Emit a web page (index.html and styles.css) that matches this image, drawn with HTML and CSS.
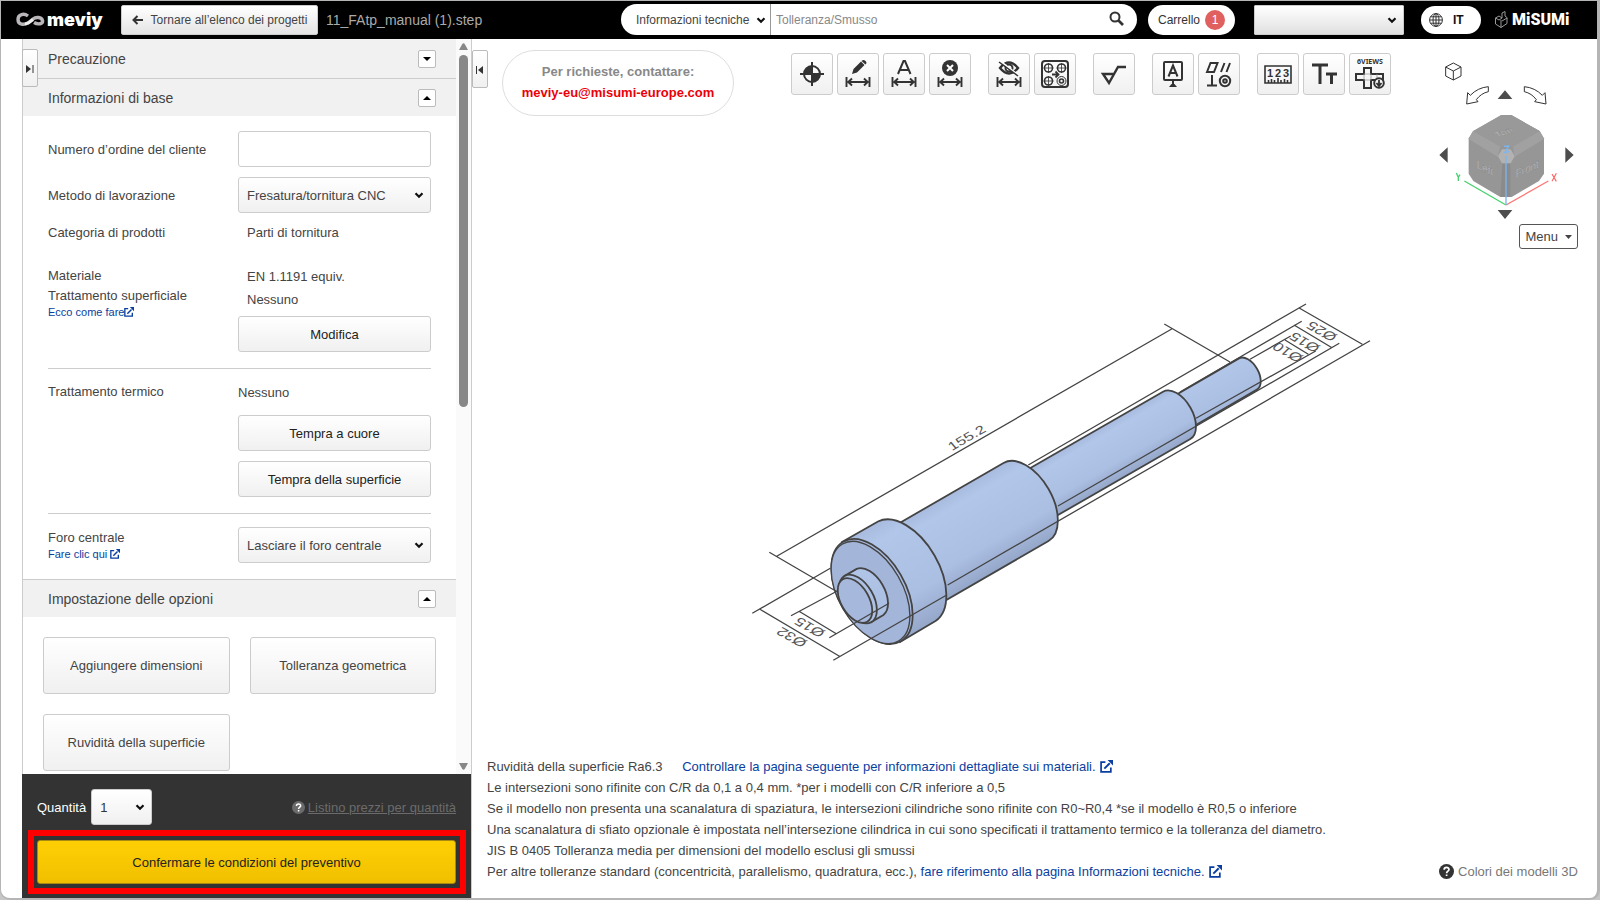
FILE: index.html
```html
<!DOCTYPE html>
<html lang="it">
<head>
    <meta charset="UTF-8">
    <meta name="viewport" content="width=device-width, initial-scale=1.0">
    <title>meviy - 11_FAtp_manual (1).step</title>
    <link rel="stylesheet" href="styles.css">
</head>
<body>

<!-- Shared icons -->
<svg class="sprite" aria-hidden="true">
    <symbol id="chevron" viewBox="0 0 10 8"><path d="M1.5 2.2L5 5.7l3.500-3.500" fill="none" stroke="currentColor" stroke-width="2.200"/></symbol>
    <symbol id="external" viewBox="0 0 12 12">
        <path d="M5 2H1v9h9V7" fill="none" stroke="currentColor" stroke-width="1.6"/>
        <path d="M4 8l5-5" fill="none" stroke="currentColor" stroke-width="1.8"/>
        <path d="M7 0h5v5z" fill="currentColor"/>
    </symbol>
    <symbol id="question" viewBox="0 0 14 14">
        <circle cx="7" cy="7" r="7" fill="currentColor"/>
        <path d="M4.8 5.4c0-3 4.6-2.8 4.5-.2C9.2 6.7 7.1 6.7 7.1 8.6M7.1 9.7v1.6" fill="none" class="mark" stroke-width="1.6"/>
    </symbol>
    <symbol id="dim" viewBox="0 0 26 12">
        <path d="M1.5 1v10M24.5 1v10M3 6h20M7 2.5L3.3 6 7 9.5M19 2.5L22.7 6 19 9.5" fill="none" stroke="currentColor" stroke-width="1.9"/>
    </symbol>
</svg>

<div class="window">
    <header class="topbar">
        <div class="logo">
            <svg width="29" height="16" viewBox="0 0 29 16">
                <path d="M12 4C8 1 2 2 2 7.500S8 13 12 11l5-4c3-2.500 8.500-2 9.500 1.500S22 13 18 10.500" fill="none" stroke="#b9b5b9" stroke-width="3.4"/>
                <path d="M9 11.5c3 1 5-1.500 8-4" fill="none" stroke="#eee" stroke-width="3"/>
            </svg>
            <span>meviy</span>
        </div>
        <button class="back">
            <svg width="11" height="10" viewBox="0 0 11 10"><path d="M11 5H2M5.500 1l-4 4 4 4" fill="none" stroke="#333" stroke-width="2"/></svg>
            Tornare all’elenco dei progetti
        </button>
        <span class="filename">11_FAtp_manual (1).step</span>

        <form class="search">
            <div class="select search-type">
                <select aria-label="Tipo di ricerca"><option>Informazioni tecniche</option></select>
                <svg class="chevron"><use href="#chevron"/></svg>
            </div>
            <input type="text" placeholder="Tolleranza/Smusso" aria-label="Cerca">
            <button type="button" aria-label="Cerca">
                <svg width="15" height="15" viewBox="0 0 15 15"><circle cx="6" cy="6" r="4.5" fill="none" stroke="#333" stroke-width="2"/><path d="M9.5 9.5l4.500 4.500" stroke="#333" stroke-width="2.6"/></svg>
            </button>
        </form>
        <button class="cart">Carrello <span class="badge">1</span></button>
        <div class="select account">
            <select aria-label="Account"><option></option></select>
            <svg class="chevron"><use href="#chevron"/></svg>
        </div>
        <button class="lang">
            <svg width="14" height="14" viewBox="0 0 14 14" fill="none" stroke="#333"><circle cx="7" cy="7" r="6.4"/><ellipse cx="7" cy="7" rx="3" ry="6.4"/><path d="M7 .6v12.800M.6 7h12.800M1.500 3.800h11M1.500 10.200h11"/></svg>
            IT
        </button>
        <div class="misumi">
            <svg width="13" height="17" viewBox="0 0 13 17" fill="none" stroke="#999"><path d="M.5 7l3.500-2 3 2-3 2zM.5 7v6L6 16.500V9M6 16.500l6-4V7L7 10M7 7V2l3-1.500V5l2.500 2"/></svg>
            <span>MiSUMi</span>
        </div>
    </header>

    <div class="content">
        <aside class="panel">
            <button class="toggle toggle-left" aria-label="Chiudi pannello">
                <svg width="8" height="8" viewBox="0 0 8 8"><path d="M0 0l5 4-5 4z" fill="#333"/><path d="M7 0v8" stroke="#333"/></svg>
            </button>
            <div class="panel-scroll">
                <div class="panel-body">
                    <div class="section-title">
                        <h2>Precauzione</h2>
                        <button class="fold" aria-label="Apri"><svg width="8" height="4" viewBox="0 0 8 4"><path d="M0 0h8L4 4z"/></svg></button>
                    </div>
                    <div class="section-title">
                        <h2>Informazioni di base</h2>
                        <button class="fold" aria-label="Chiudi"><svg width="8" height="4" viewBox="0 0 8 4"><path d="M0 4h8L4 0z"/></svg></button>
                    </div>

                    <div class="fields">
                        <div class="field center">
                            <label for="orderNo">Numero d’ordine del cliente</label>
                            <input type="text" id="orderNo">
                        </div>
                        <div class="field center">
                            <label for="method">Metodo di lavorazione</label>
                            <div class="select">
                                <select id="method"><option>Fresatura/tornitura CNC</option></select>
                                <svg class="chevron"><use href="#chevron"/></svg>
                            </div>
                        </div>
                        <div class="field category">
                            <span>Categoria di prodotti</span>
                            <span class="value">Parti di tornitura</span>
                        </div>
                        <div class="field">
                            <div class="names">
                                <p>Materiale</p>
                                <p>Trattamento superficiale</p>
                                <a href="#">Ecco come fare<svg><use href="#external"/></svg></a>
                            </div>
                            <div class="stack material">
                                <p class="value">EN 1.1191 equiv.</p>
                                <p class="value">Nessuno</p>
                                <button class="btn">Modifica</button>
                            </div>
                        </div>
                        <hr>
                        <div class="field">
                            <div class="names"><p>Trattamento termico</p></div>
                            <div class="stack heat">
                                <p>Nessuno</p>
                                <button class="btn">Tempra a cuore</button>
                                <button class="btn">Tempra della superficie</button>
                            </div>
                        </div>
                        <hr>
                        <div class="field hole">
                            <div class="names">
                                <label for="hole">Foro centrale</label>
                                <a href="#">Fare clic qui <svg><use href="#external"/></svg></a>
                            </div>
                            <div class="select">
                                <select id="hole"><option>Lasciare il foro centrale</option></select>
                                <svg class="chevron"><use href="#chevron"/></svg>
                            </div>
                        </div>
                    </div>

                    <div class="section-title">
                        <h2>Impostazione delle opzioni</h2>
                        <button class="fold" aria-label="Chiudi"><svg width="8" height="4" viewBox="0 0 8 4"><path d="M0 4h8L4 0z"/></svg></button>
                    </div>
                    <div class="options">
                        <button class="btn">Aggiungere dimensioni</button>
                        <button class="btn">Tolleranza geometrica</button>
                        <button class="btn">Ruvidità della superficie</button>
                    </div>
                </div>
                <div class="scrollbar">
                    <svg width="9" height="7" viewBox="0 0 9 7"><path d="M0 7h9L6 1.500Q4.500-1 3 1.500z" fill="#888"/></svg>
                    <div class="track"><div class="thumb"></div></div>
                    <svg width="9" height="7" viewBox="0 0 9 7"><path d="M0 0h9L6 5.500Q4.500 8 3 5.500z" fill="#888"/></svg>
                </div>
            </div>

            <div class="order">
                <div class="order-row">
                    <label for="qty">Quantità</label>
                    <div class="select qty">
                        <select id="qty"><option>1</option></select>
                        <svg class="chevron"><use href="#chevron"/></svg>
                    </div>
                    <a href="#" class="price-list"><svg><use href="#question"/></svg><span>Listino prezzi per quantità</span></a>
                </div>
                <div class="highlight">
                    <button class="confirm">Confermare le condizioni del preventivo</button>
                </div>
            </div>
        </aside>

        <main class="viewer">
            <button class="toggle toggle-right" aria-label="Apri pannello">
                <svg width="8" height="8" viewBox="0 0 8 8"><path d="M7 0L2 4l5 4z" fill="#333"/><path d="M.5 0v8" stroke="#333"/></svg>
            </button>
            <div class="viewer-top">
                <div class="contact">
                    <p>Per richieste, contattare:</p>
                    <a href="mailto:meviy-eu@misumi-europe.com">meviy-eu@misumi-europe.com</a>
                </div>
                <div class="toolbar">
                    <div class="group">
                        <button aria-label="Origine"><svg viewBox="0 0 40 40"><circle cx="20" cy="20" r="8" fill="none" stroke="#333" stroke-width="2"/><path d="M20 20v-8a8 8 0 0 0-8 8zM20 20v8a8 8 0 0 0 8-8z" fill="#333"/><path d="M20 8v24M8 20h24" stroke="#333" stroke-width="2"/></svg></button>
                        <button aria-label="Modifica quota"><svg viewBox="0 0 40 40"><use href="#dim" x="7" y="22" width="26" height="12"/><path d="M14 20l1.500-5L23 7.500l3.500 3.500L19 18.500zM24 6.500q1.500-1 3 0t1.500 2.500L27.500 10.500 23.500 7z" fill="#333"/></svg></button>
                        <button aria-label="Quota con testo"><svg viewBox="0 0 40 40"><use href="#dim" x="7" y="22" width="26" height="12"/><path d="M14 20l5.500-13h1.500L26.500 20M16 16h8.500" fill="none" stroke="#333" stroke-width="2"/></svg></button>
                        <button aria-label="Elimina quota"><svg viewBox="0 0 40 40"><use href="#dim" x="7" y="22" width="26" height="12"/><circle cx="20" cy="14" r="8" fill="#333"/><path d="M17 11l6 6M23 11l-6 6" stroke="#fff" stroke-width="2"/></svg></button>
                    </div>
                    <div class="group">
                        <button aria-label="Nascondi quote"><svg viewBox="0 0 40 40"><use href="#dim" x="7" y="22" width="26" height="12"/><path d="M11 14q9-11 18 0-9 11-18 0z" fill="none" stroke="#333" stroke-width="2.4"/><circle cx="20" cy="14" r="3.5" fill="none" stroke="#333" stroke-width="2"/><path d="M11 7l18 14" stroke="#fff" stroke-width="2"/><path d="M10 8l19 14" stroke="#333" stroke-width="1.5"/></svg></button>
                        <button aria-label="Fori"><svg viewBox="0 0 40 40" fill="none" stroke="#333" stroke-width="1.6"><rect x="7" y="7" width="26" height="26" rx="3" stroke-width="2"/><circle cx="13.5" cy="14" r="4"/><circle cx="26.5" cy="14" r="4"/><circle cx="13.5" cy="27" r="4"/><circle cx="26.5" cy="27" r="4.5" stroke-width="1"/><circle cx="26.5" cy="27" r="2"/><path d="M13.500 9v10M8.500 14h10M26.500 9v10M21.500 14h10M13.500 22v10M8.500 27h10" stroke-width=".8"/><path d="M17 20.500h6M20.500 17.500l3 3-3 3" stroke-width="1.8"/></svg></button>
                    </div>
                    <div class="group">
                        <button aria-label="Rugosità"><svg viewBox="0 0 40 40" fill="none" stroke="#333" stroke-width="2.4"><path d="M32 13h-8l-9 16-6-9h11"/></svg></button>
                    </div>
                    <div class="group">
                        <button aria-label="Riferimento"><svg viewBox="0 0 40 40" fill="none" stroke="#333" stroke-width="2"><rect x="11" y="8" width="18" height="18" rx="1"/><path d="M15.500 22.500l4.500-11 4.500 11M17 19h6M20 26v4"/><path d="M16 33h8l-2.500-3h-3z" fill="#333" stroke="none"/></svg></button>
                        <button aria-label="Tolleranza geometrica"><svg viewBox="0 0 40 40" fill="none" stroke="#333" stroke-width="2"><path d="M8 18l3.500-9h7L15 18zM22 18l3.500-9M27.500 18L31 9M13 21v11M8 31.500h10"/><circle cx="26" cy="27" r="5.2"/><circle cx="26" cy="27" r="1.8"/></svg></button>
                    </div>
                    <div class="group">
                        <button aria-label="Misura"><svg viewBox="0 0 40 40"><path d="M7 12h26v17H7zM10.500 29v-3M13.500 29v-4M16.500 29v-3M20 29v-5M23 29v-3M26.500 29v-4M29.500 29v-3" fill="none" stroke="#333" stroke-width="1.6"/><text x="12" y="23" class="ruler-text">1</text><text x="20" y="23" class="ruler-text">2</text><text x="28" y="23" class="ruler-text">3</text></svg></button>
                        <button aria-label="Dimensione testo"><svg viewBox="0 0 40 40" fill="none" stroke="#333"><path d="M8 11h16M16 11v19" stroke-width="3"/><path d="M22 20h11M27.500 20v10" stroke-width="3"/></svg></button>
                        <button aria-label="Sei viste"><svg viewBox="0 0 40 40"><text x="20" y="10" class="views-text">6VIEWS</text><path d="M14 14h7v6h12v6H21v8h-7v-8H6v-6h8z" fill="none" stroke="#333" stroke-width="2"/><path d="M14 20h7v6h-7zM27 20v5" fill="none" stroke="#999" stroke-width=".8"/><circle cx="29" cy="29" r="4.8" fill="#f5f5f5" stroke="#333" stroke-width="2"/><path d="M29 26v6M26.500 29l2.500 3 2.500-3" fill="none" stroke="#333" stroke-width="1.8"/></svg></button>
                    </div>
                </div>
            </div>

            <!-- View cube -->
            <div class="navigator">
                <svg class="viewcube" viewBox="110 30 426 489">
                    <path d="M162 39l23 12v27l-23 12-23-12V51zM139 51l23 12 23-12M162 63v27" fill="none" stroke="#333" stroke-width="3"/>
                    <path d="M267 110v15q-22 5-36 24l5 6-34 7 3-34 8 8q22-23 54-26z" fill="#fff" stroke="#333" stroke-width="3"/>
                    <path d="M375 110v15q22 5 36 24l-5 6 34 7-3-34-8 8q-22-23-54-26z" fill="#fff" stroke="#333" stroke-width="3"/>
                    <path d="M295 147l22-26 22 26zM295 480h44l-22 27zM145 292v46l-25-23zM498 292v46l25-23z" fill="#4d4d4d"/>
                    <path d="M306 195h30l85 48 13 22v106l-15 22-82 48h-34l-81-48-14-22V265l12-20z" fill="#969696"/>
                    <path d="M306 195h30l85 48-80 47h-38l-82-47z" fill="#999"/>
                    <path d="M221 243l82 47-8 30-87-53zM421 243l-80 47 5 30 88-53z" fill="#a1a1a1"/>
                    <path d="M309 340h24v101h-30z" fill="#8b8b8b"/>
                    <path d="M308 298h26l12 21-12 21h-26l-12-21z" fill="#b2b2b2"/>
                    <text transform="matrix(.87 -.4 .6 .6 320 254)" class="face">Top</text>
                    <text transform="matrix(.87 .45 0 1 257 366)" class="face">Left</text>
                    <text transform="matrix(.87 -.4 0 1 384 368)" class="face">Front</text>
                    <path d="M195 393l125 72" stroke="#47d16c" stroke-width="4"/>
                    <path d="M320 465l127-72" stroke="#f77" stroke-width="4"/>
                    <path d="M320 465V318" stroke="#7ab6f2" stroke-width="4"/>
                    <path d="M314 289l14-1-12 20 14-4" fill="none" stroke="#7ab6f2" stroke-width="4"/>
                    <path d="M171 369l6 13 5-8M177 382v11" fill="none" stroke="#47d16c" stroke-width="4"/>
                    <path d="M458 372l13 22M471 370l-13 24" stroke="#f66" stroke-width="3.5"/>
                </svg>
                <button class="menu">Menu <svg width="7" height="4" viewBox="0 0 7 4"><path d="M0 0h7L3.500 4z" fill="#444"/></svg></button>
            </div>

            <!-- Turned part with its dimensions -->
            <svg class="stage" viewBox="472 117 1125 638">
                <defs>
                    <linearGradient id="gHead" gradientUnits="userSpaceOnUse" x1="842" y1="542" x2="900" y2="642"><stop offset="0" stop-color="#a8bbdf"/><stop offset=".15" stop-color="#b1c6e9"/><stop offset=".7" stop-color="#abbfe3"/><stop offset="1" stop-color="#95a7c9"/></linearGradient>
                    <linearGradient id="gBody" gradientUnits="userSpaceOnUse" x1="1003" y1="463" x2="1048" y2="541"><stop offset="0" stop-color="#a8bbdf"/><stop offset=".15" stop-color="#b1c6e9"/><stop offset=".7" stop-color="#abbfe3"/><stop offset="1" stop-color="#95a7c9"/></linearGradient>
                    <linearGradient id="gShaft" gradientUnits="userSpaceOnUse" x1="1163" y1="392" x2="1190" y2="439"><stop offset="0" stop-color="#a8bbdf"/><stop offset=".15" stop-color="#b1c6e9"/><stop offset=".7" stop-color="#abbfe3"/><stop offset="1" stop-color="#95a7c9"/></linearGradient>
                </defs>
                <g stroke="#444" stroke-width="1.8">
                    <path d="M1167.6 399.7L1239 358.4A18 10.4 60 0 1 1257 389.6L1185.6 431z" fill="url(#gShaft)"/>
                    <path d="M1012.4 478.4L1163 391.7A27.3 15.8 60 0 1 1190.3 439L1039.6 525.6z" fill="url(#gShaft)"/>
                    <path d="M884 532L1003.5 463A45 26 60 0 1 1048.5 541L929 610z" fill="url(#gBody)"/>
                    <path d="M842 542L878 521.5A57.5 33.2 60 0 1 935.5 621L900 642z" fill="url(#gHead)"/>
                    <ellipse cx="872" cy="591.5" rx="57.5" ry="33.2" transform="rotate(60 872 591.5)" fill="#a9bce0"/>
                    <ellipse cx="870.5" cy="592.5" rx="56" ry="32" transform="rotate(60 870.5 592.5)" fill="#a3b5d8" stroke-width="1.4"/>
                    <path d="M844.7 575.9L856.7 568.9A26.7 15.4 60 0 1 883.4 615L871.4 622z" fill="url(#gHead)"/>
                    <ellipse cx="858" cy="599" rx="26.7" ry="15.4" transform="rotate(60 858 599)" fill="#adc1e5"/>
                    <ellipse cx="855" cy="600.5" rx="24.5" ry="14" transform="rotate(60 855 600.5)" fill="#a6b8dc"/>
                </g>
                <path class="dims" d="M776.7 556.3L1171.7 329M769.3 552.3L837 591.7M1164.3 324L1230 362
                    M752.3 613.3L830.3 568.3M760 609.3L840.3 656.7M833.3 660.3L946.7 595
                    M791 615.7L837.7 590.7M799 611.3L836.3 633.7M829.3 637.7L889 603.3
                    M1306 304L1028.3 465M1298.7 307.7L1362.3 344.3M1370 340.7L947.7 585
                    M1301.7 321.3L1180 392M1294 325L1332 347.7M1339.3 343.3L1058 506
                    M1290.7 336L1250 359.3M1285 340L1308.3 354.3M1315.7 351L1196 418.3"/>
                <g class="dim-text">
                    <text transform="matrix(.87 -.5 .5 .6 967 438)" y="5">155.2</text>
                    <text transform="matrix(-.87 -.5 .6 -.6 1322 331)" y="5">Ø25</text>
                    <text transform="matrix(-.87 -.5 .6 -.6 1305 342)" y="5">Ø15</text>
                    <text transform="matrix(-.87 -.5 .6 -.6 1288 352)" y="5">Ø10</text>
                    <text transform="matrix(-.87 -.5 .6 -.6 810 627)" y="5">Ø15</text>
                    <text transform="matrix(-.87 -.5 .6 -.6 792 637)" y="5">Ø32</text>
                </g>
            </svg>

            <div class="notes">
                <div>
                    <p>Ruvidità della superficie Ra6.3 <a href="#" class="materials">Controllare la pagina seguente per informazioni dettagliate sui materiali. <svg><use href="#external"/></svg></a></p>
                    <p>Le intersezioni sono rifinite con C/R da 0,1 a 0,4 mm. *per i modelli con C/R inferiore a 0,5</p>
                    <p>Se il modello non presenta una scanalatura di spaziatura, le intersezioni cilindriche sono rifinite con R0~R0,4 *se il modello è R0,5 o inferiore</p>
                    <p>Una scanalatura di sfiato opzionale è impostata nell’intersezione cilindrica in cui sono specificati il trattamento termico e la tolleranza del diametro.</p>
                    <p>JIS B 0405 Tolleranza media per dimensioni del modello esclusi gli smussi</p>
                    <p>Per altre tolleranze standard (concentricità, parallelismo, quadratura, ecc.), <a href="#">fare riferimento alla pagina Informazioni tecniche. <svg><use href="#external"/></svg></a></p>
                </div>
                <a href="#" class="colors"><svg><use href="#question"/></svg>Colori dei modelli 3D</a>
            </div>
        </main>
    </div>
</div>

</body>
</html>
```

FILE: styles.css
```css
* {
    box-sizing: border-box;
}
body {
    margin: 0;
    background-color: #c6c6c6;
    color: #444;
    font-family: "Liberation Sans", Arial, sans-serif;
    font-size: 13px;
}
button, input, select {
    font: inherit;
    color: inherit;
    margin: 0;
}
button {
    padding: 0;
    cursor: pointer;
}
p, h2 {
    margin: 0;
}
a {
    color: #0a3ea0;
    text-decoration: none;
}
svg {
    flex-shrink: 0;
}
.sprite {
    position: absolute;
    width: 0;
    height: 0;
}
.window {
    display: flex;
    flex-direction: column;
    height: 100vh;
    border: 1px solid #b5b5b5;
    border-width: 1px 3px 2px 1px;
    border-radius: 0 0 10px 10px;
    background-color: #fff;
    overflow: hidden;
}

/* Top bar */
.topbar {
    display: flex;
    align-items: center;
    height: 38px;
    flex-shrink: 0;
    padding: 0 27px 1px 15px;
    background-color: #000;
    font-size: 12px;
}
.logo {
    display: flex;
    align-items: center;
    gap: 2px;
    width: 105px;
    color: #fff;
    font: 900 18px/20px Inter, sans-serif;
}
.back {
    display: flex;
    align-items: center;
    justify-content: center;
    gap: 8px;
    width: 197px;
    height: 30px;
    border: 1px solid #ccc;
    border-radius: 2px;
    background: linear-gradient(#fff, #e4e4e4);
}
.filename {
    margin-left: 8px;
    color: #aaa;
    font-size: 14px;
    white-space: nowrap;
}
.search {
    display: flex;
    width: 516px;
    height: 31px;
    margin-left: auto;
    border-radius: 16px;
    background-color: #fff;
    overflow: hidden;
}
.search input {
    flex: 1;
    min-width: 0;
    padding: 0 5px;
    border: none;
    outline: none;
    background: none;
}
.search input::placeholder {
    color: #888;
}
.search button {
    width: 42px;
    border: none;
    background: none;
}
.select {
    position: relative;
}
.select select {
    display: block;
    width: 100%;
    height: 36px;
    padding: 0 30px 0 8px;
    border: 1px solid #ccc;
    border-radius: 3px;
    background: linear-gradient(#fff, #f0f0f0);
    appearance: none;
}
.chevron {
    position: absolute;
    top: 50%;
    right: 7px;
    width: 10px;
    height: 8px;
    margin-top: -4px;
    color: #111;
    pointer-events: none;
}
.search-type {
    width: 150px;
    border-right: 1px solid #999;
}
.search-type select {
    height: 31px;
    padding: 0 0 0 15px;
    border: none;
    background: none;
}
.search-type .chevron {
    right: 4px;
}
.cart {
    display: flex;
    align-items: center;
    justify-content: center;
    gap: 5px;
    width: 87px;
    height: 30px;
    margin-left: 11px;
    border: none;
    border-radius: 15px;
    background-color: #fff;
    color: #333;
}
.badge {
    width: 20px;
    border-radius: 10px;
    background-color: #e06060;
    color: #fff;
    line-height: 20px;
}
.account {
    width: 150px;
    margin-left: 19px;
}
.account select {
    height: 30px;
    border-radius: 1px;
    background: linear-gradient(#fff, #e0e0e0);
}
.lang {
    display: flex;
    align-items: center;
    gap: 10px;
    width: 60px;
    height: 28px;
    padding-left: 8px;
    margin-left: 17px;
    border: none;
    border-radius: 14px;
    background-color: #fff;
    color: #111;
    font-weight: bold;
}
.misumi {
    display: flex;
    align-items: center;
    gap: 4px;
    width: 75px;
    margin-left: 14px;
    color: #fff;
    font: 900 16px/18px Roboto, sans-serif;
}

/* Left panel */
.content {
    display: flex;
    flex: 1;
    min-height: 0;
}
.panel {
    position: relative;
    display: flex;
    flex-direction: column;
    width: 450px;
    flex-shrink: 0;
    margin-left: 21px;
    border: 1px solid #ccc;
    border-width: 0 1px;
}
.panel-scroll {
    display: flex;
    flex: 1;
    min-height: 0;
}
.panel-body {
    flex: 1;
    overflow: hidden;
}
.toggle {
    position: absolute;
    top: 10px;
    left: -1px;
    z-index: 1;
    width: 16px;
    height: 38px;
    border: 1px solid #bbb;
    border-radius: 2px;
    background: linear-gradient(#fff, #f0f0f0);
}
.toggle-right {
    top: 11px;
    left: 0;
}
.section-title {
    display: flex;
    align-items: center;
    justify-content: space-between;
    height: 38px;
    padding: 0 20px 0 25px;
    border-top: 1px solid #ccc;
    background-color: #f1f1f1;
}
.section-title:first-child {
    height: 39px;
    border-top: none;
}
.section-title h2 {
    font-size: 14px;
    font-weight: normal;
}
.fold {
    display: flex;
    align-items: center;
    justify-content: center;
    width: 18px;
    height: 18px;
    border: 1px solid #bbb;
    border-radius: 2px;
    background-color: #fff;
}
.fields {
    padding: 15px 25px 16px;
}
.field {
    display: grid;
    grid-template-columns: 190px 1fr;
    margin-bottom: 10px;
}
.field.center {
    align-items: center;
}
.field input {
    height: 36px;
    width: 100%;
    border: 1px solid #ccc;
    border-radius: 3px;
}
.field.category {
    margin-bottom: 22px;
    line-height: 20px;
}
.value {
    padding-left: 9px;
}
.names {
    padding-top: 1px;
    line-height: 20px;
}
.names label {
    display: block;
}
.names a {
    display: block;
    font-size: 11px;
    line-height: 12px;
}
.names a svg {
    width: 10px;
    height: 10px;
    vertical-align: -1px;
}
.stack {
    line-height: 23px;
}
.btn {
    display: block;
    width: 100%;
    height: 36px;
    border: 1px solid #ccc;
    border-radius: 3px;
    background: linear-gradient(#fff, #f0f0f0);
    color: #222;
}
.material .btn {
    margin-top: 5px;
}
.heat .btn {
    margin-top: 10px;
}
.heat p {
    margin-bottom: 11px;
}
.fields hr {
    margin: 16px 0 12px;
    border: none;
    border-top: 1px solid #ccc;
}
.field.hole {
    margin: 13px 0 0;
}
.options {
    display: grid;
    grid-template-columns: 1fr 1fr;
    gap: 20px;
    padding: 20px;
}
.options .btn {
    height: 57px;
    color: #444;
}
.scrollbar {
    display: flex;
    flex-direction: column;
    align-items: center;
    gap: 5px;
    width: 15px;
    padding: 4px 0;
    background-color: #fafafa;
}
.track {
    flex: 1;
    width: 9px;
}
.thumb {
    width: 9px;
    height: 50%;
    border-radius: 5px;
    background-color: #888;
}
.order {
    margin-left: -1px;
    padding: 15px 5px 4px 6px;
    background-color: #333;
}
.order-row {
    display: flex;
    align-items: center;
    padding: 0 10px 0 9px;
    color: #fff;
}
.qty {
    width: 61px;
    margin-left: 5px;
    color: #333;
}
.price-list {
    display: flex;
    align-items: center;
    gap: 3px;
    margin-left: auto;
    color: #6b6b6b;
}
.price-list span {
    text-decoration: underline;
}
.price-list svg {
    width: 13px;
    height: 13px;
}
.mark {
    stroke: #fff;
}
.price-list .mark {
    stroke: #333;
}
.highlight {
    margin-top: 5px;
    padding: 4px 4px 4px 3px;
    border: 6px solid #f00;
}
.confirm {
    width: 100%;
    height: 44px;
    border: 1px solid #a88a10;
    border-radius: 3px;
    background: linear-gradient(#ffcf05, #f0c000);
    color: #222;
}

/* Viewer */
.viewer {
    position: relative;
    display: flex;
    flex-direction: column;
    flex: 1;
    min-width: 0;
}
.viewer-top {
    display: flex;
    align-items: flex-start;
    gap: 57px;
    padding: 11px 30px 0;
}
.contact {
    width: 232px;
    height: 66px;
    padding-top: 10px;
    border: 1px solid #ddd;
    border-radius: 33px;
    color: #888;
    font-weight: bold;
    line-height: 21px;
    text-align: center;
}
.contact a {
    color: #ec0008;
}
.toolbar {
    display: flex;
    gap: 17px;
    padding-top: 3px;
}
.group {
    display: flex;
    gap: 4px;
}
.group button {
    width: 42px;
    height: 42px;
    border: 1px solid #ccc;
    border-radius: 3px;
    background: linear-gradient(#fff, #f0f0f0);
    color: #333;
}
.group svg {
    display: block;
    width: 40px;
    height: 40px;
}
.ruler-text {
    font: bold 11px "Liberation Sans", sans-serif;
    text-anchor: middle;
    fill: #333;
}
.views-text {
    font: bold 7px "Noto Sans", sans-serif;
    text-anchor: middle;
    fill: #333;
}
.navigator {
    position: absolute;
    top: 21px;
    right: 19px;
    display: flex;
    flex-direction: column;
    align-items: flex-end;
    gap: 1px;
}
.viewcube {
    width: 142px;
    height: 163px;
}
.face {
    font: 34px "Liberation Sans", sans-serif;
    text-anchor: middle;
    fill: #ccc;
    stroke: #777;
    stroke-width: 1px;
}
.menu {
    width: 59px;
    height: 25px;
    border: 1px solid #555;
    border-radius: 3px;
    background-color: #fff;
}
.menu svg {
    margin-left: 3px;
    vertical-align: 2px;
}
.stage {
    flex: 1;
    width: 100%;
    min-height: 0;
}
.dims {
    fill: none;
    stroke: #444;
    stroke-width: 1.3px;
}
.dim-text text {
    font: 16px "Liberation Sans", sans-serif;
    text-anchor: middle;
    fill: #555;
}
.notes {
    display: flex;
    align-items: flex-end;
    justify-content: space-between;
    padding: 0 19px 16px 15px;
    line-height: 21px;
}
.notes a svg {
    width: 13px;
    height: 13px;
    margin-left: 1px;
    vertical-align: -2px;
}
.materials {
    margin-left: 16px;
}
.notes .colors {
    display: flex;
    align-items: center;
    gap: 4px;
    color: #777;
    white-space: nowrap;
}
.notes .colors svg {
    width: 15px;
    height: 15px;
    color: #333;
}
```
